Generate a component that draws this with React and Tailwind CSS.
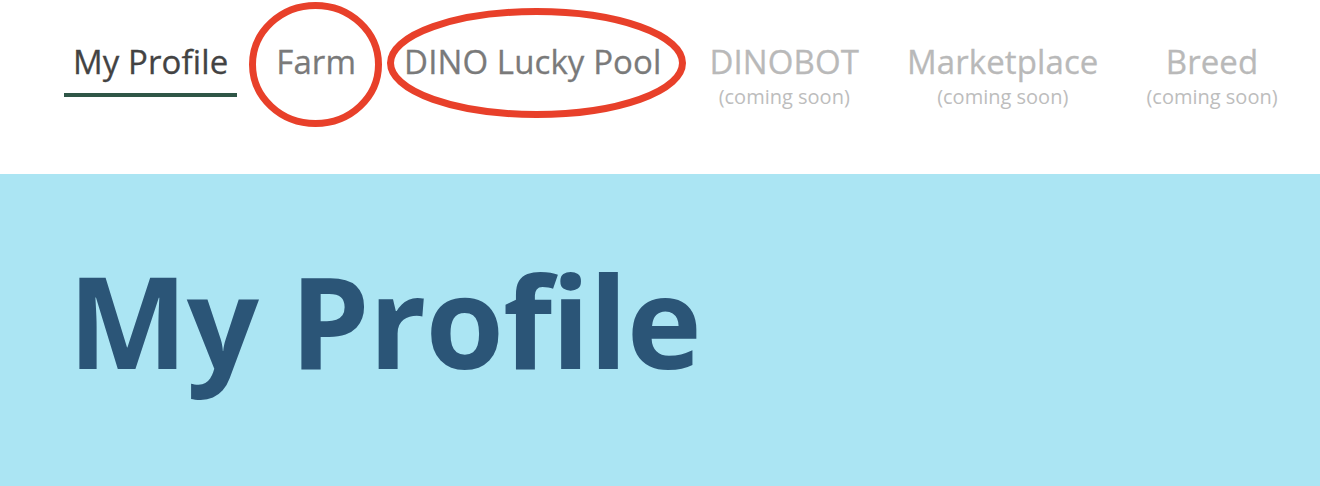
import React from "react";

const font = { fontFamily: '"Open Sans", sans-serif' };

function NavItem({ title, sub, active, color }) {
  return (
    <div className="flex flex-col items-center">
      <div className={`px-[9px] pb-[10px] ${active ? "border-b-4 border-[#2f5647]" : "border-b-4 border-transparent"}`}>
        <div className={`text-[33px] leading-[42px] font-normal tracking-[0.1px] ${color} whitespace-nowrap [-webkit-text-stroke:0.3px_currentColor]`}>{title}</div>
      </div>
      {sub && (
        <div className="-mt-[13px] px-[9px] text-[20px] leading-[26px] text-[#bdbdbd] whitespace-nowrap">{sub}</div>
      )}
    </div>
  );
}

export default function App() {
  return (
    <div className="w-[1320px] h-[486px] bg-white overflow-hidden relative" style={font}>
      <nav className="h-[174px] flex items-start pl-[64px] pt-[41px] gap-[30px]">
        <NavItem title="My Profile" active color="text-[#434343]" />
        <NavItem title="Farm" color="text-[#7a7a7a]" />
        <NavItem title="DINO Lucky Pool" color="text-[#7a7a7a]" />
        <NavItem title="DINOBOT" sub="(coming soon)" color="text-[#b9b9b9]" />
        <NavItem title="Marketplace" sub="(coming soon)" color="text-[#b9b9b9]" />
        <NavItem title="Breed" sub="(coming soon)" color="text-[#b9b9b9]" />
      </nav>
      <section className="h-[312px] bg-[#abe5f3] pl-[68px] pt-[59px]">
        <h1 className="text-[127px] leading-[174px] font-bold text-[#2b5577] tracking-[-1px]">My Profile</h1>
      </section>
      <svg className="absolute left-0 top-0 pointer-events-none" width="1320" height="174">
        <ellipse cx="315.5" cy="64.5" rx="63" ry="59" fill="none" stroke="#e8402a" strokeWidth="7" />
        <ellipse cx="536.5" cy="63" rx="146" ry="51.5" fill="none" stroke="#e8402a" strokeWidth="7" />
      </svg>
    </div>
  );
}
